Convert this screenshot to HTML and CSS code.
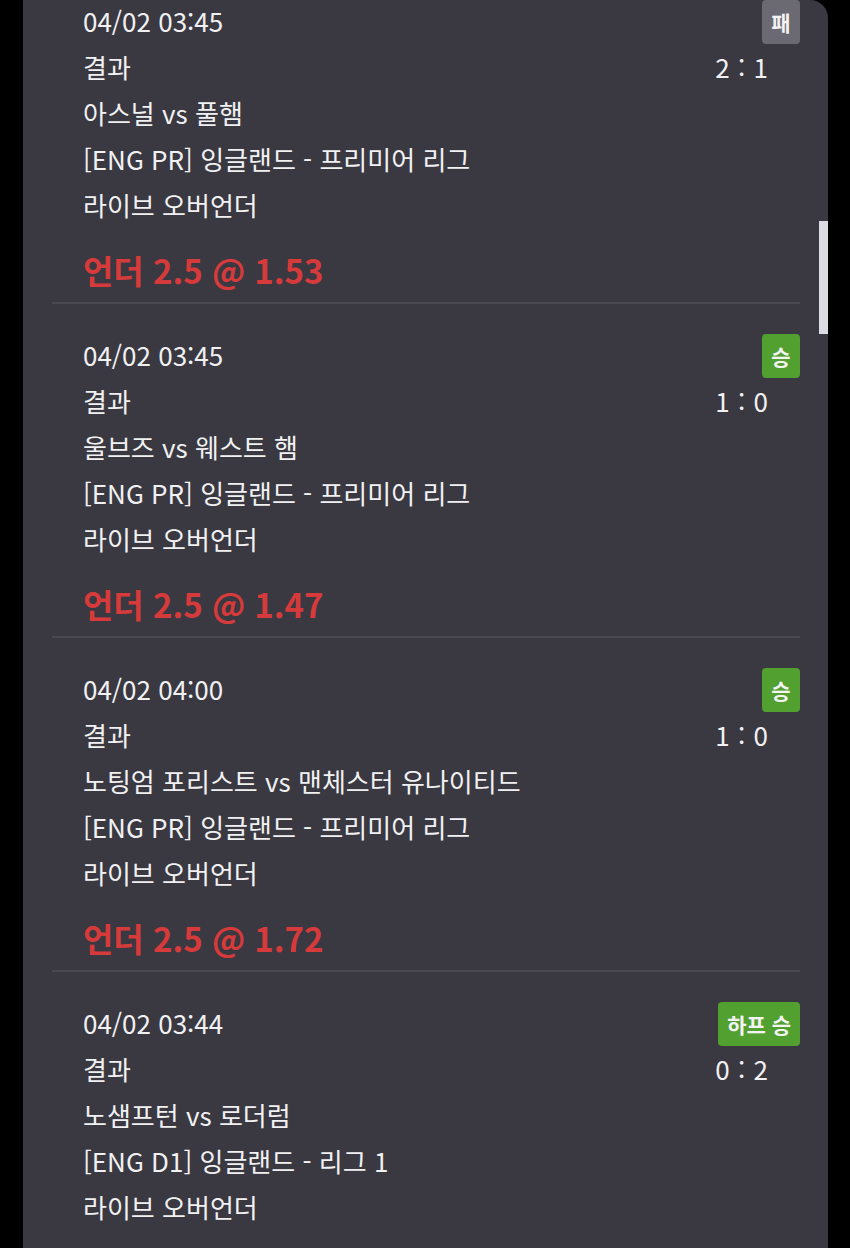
FILE: index.html
```html
<!DOCTYPE html>
<html lang="ko">
<head>
  <meta charset="UTF-8">
  <title>베팅 내역</title>
  <link rel="stylesheet" href="styles.css">
</head>
<body>
  <div class="panel">
    <div class="scrollbar"></div>
    <ul class="bet-list">
      <li class="bet">
        <div class="bet-head">
          <span class="date">04/02 03:45</span>
          <span class="badge lose">패</span>
        </div>
        <div class="row"><span>결과</span><span class="score">2 : 1</span></div>
        <div class="row">아스널 vs 풀햄</div>
        <div class="row">[ENG PR] 잉글랜드 - 프리미어 리그</div>
        <div class="row">라이브 오버언더</div>
        <div class="pick">언더 2.5 @ 1.53</div>
      </li>
      <li class="bet">
        <div class="bet-head">
          <span class="date">04/02 03:45</span>
          <span class="badge win">승</span>
        </div>
        <div class="row"><span>결과</span><span class="score">1 : 0</span></div>
        <div class="row">울브즈 vs 웨스트 햄</div>
        <div class="row">[ENG PR] 잉글랜드 - 프리미어 리그</div>
        <div class="row">라이브 오버언더</div>
        <div class="pick">언더 2.5 @ 1.47</div>
      </li>
      <li class="bet">
        <div class="bet-head">
          <span class="date">04/02 04:00</span>
          <span class="badge win">승</span>
        </div>
        <div class="row"><span>결과</span><span class="score">1 : 0</span></div>
        <div class="row">노팅엄 포리스트 vs 맨체스터 유나이티드</div>
        <div class="row">[ENG PR] 잉글랜드 - 프리미어 리그</div>
        <div class="row">라이브 오버언더</div>
        <div class="pick">언더 2.5 @ 1.72</div>
      </li>
      <li class="bet">
        <div class="bet-head">
          <span class="date">04/02 03:44</span>
          <span class="badge win">하프 승</span>
        </div>
        <div class="row"><span>결과</span><span class="score">0 : 2</span></div>
        <div class="row">노샘프턴 vs 로더럼</div>
        <div class="row">[ENG D1] 잉글랜드 - 리그 1</div>
        <div class="row">라이브 오버언더</div>
      </li>
    </ul>
  </div>
</body>
</html>
```

FILE: styles.css
```css
* { box-sizing: border-box; margin: 0; padding: 0; }
html, body { height: 100%; }
body {
  background: #000;
  font-family: "Noto Sans CJK KR", "Noto Sans", sans-serif;
  color: #f1f1f3;
  overflow: hidden;
}
.panel {
  position: relative;
  margin-left: 23px;
  width: 805px;
  height: 100%;
  background: #3a3941;
  border-top-right-radius: 18px;
  overflow: hidden;
}
.scrollbar {
  position: absolute;
  top: 221px;
  right: 0;
  width: 9px;
  height: 113px;
  background: #dcdce3;
}
.bet-list {
  list-style: none;
  padding-left: 29px;
  width: 777px;
}
.bet {
  padding-left: 31px;
  padding-bottom: 8px;
  border-bottom: 2px solid #4a4951;
  margin-bottom: 30px;
}
.bet:last-child { border-bottom: none; }
.bet-head {
  height: 44px;
  display: flex;
  align-items: center;
  justify-content: space-between;
}
.date {
  font-size: 26px;
  margin-top: -4px;
}
.row {
  font-size: 26px;
  height: 46px;
  line-height: 45px;
  display: flex;
  justify-content: space-between;
}
.score {
  padding-right: 32px;
  word-spacing: 1px;
}
.badge {
  height: 44px;
  min-width: 38px;
  padding: 0 9px;
  border-radius: 4px;
  display: flex;
  align-items: center;
  justify-content: center;
  font-size: 21px;
  font-weight: bold;
  color: #f4f4f4;
}
.badge.lose { background: #6b6a72; }
.badge.win { background: #52a030; }
.pick {
  margin-top: 20px;
  height: 46px;
  line-height: 44px;
  font-size: 33px;
  font-weight: bold;
  color: #d63a3b;
}
```
